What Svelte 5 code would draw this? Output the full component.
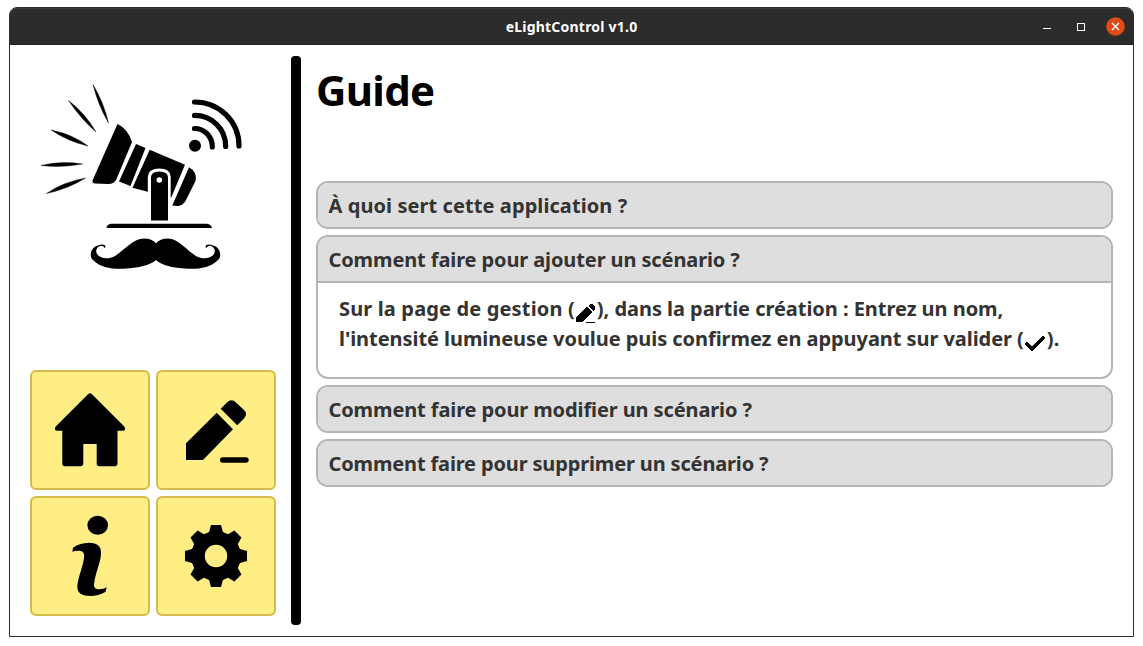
<script>
  const questions = [
    { title: 'À quoi sert cette application ?', open: false, spacing: 0.08 },
    { title: 'Comment faire pour ajouter un scénario ?', open: true, spacing: -0.11 },
    { title: 'Comment faire pour modifier un scénario ?', open: false, spacing: -0.11 },
    { title: 'Comment faire pour supprimer un scénario ?', open: false, spacing: -0.15 }
  ];

  const teeth = [0, 45, 90, 135, 180, 225, 270, 315];
</script>

<div class="window">
  <header class="titlebar">
    <span class="side"></span>
    <span class="title">eLightControl v1.0</span>
    <span class="side controls">
      <svg width="9" height="10" viewBox="0 0 9 10"><rect x="0" y="6" width="8" height="1" fill="#fff" /></svg>
      <svg width="8" height="8" viewBox="0 0 8 8"><rect x="0.5" y="0.5" width="7" height="7" fill="none" stroke="#fff" /></svg>
      <svg class="close" width="19" height="19" viewBox="0 0 19 19">
        <circle cx="9.5" cy="9.5" r="9.3" fill="#e24b17" />
        <path d="M6 6l7 7M13 6l-7 7" stroke="#fff" stroke-width="1.4" />
      </svg>
    </span>
  </header>

  <main class="content">
    <aside class="sidebar">
      <svg class="logo" viewBox="30 75 240 205">
        <path d="M93 84.5Q104 103 108.5 123Q98 105 93 84.5ZM68.5 100.5Q85 113 96 132Q81 119 68.5 100.5ZM51 130Q72 134 88 146Q68 141.500 51 130ZM41 165.500Q60 160.500 82.500 164Q62 168 41 165.500ZM46.500 193.500Q63 182 85.500 178Q68 189 46.500 193.500Z" stroke="#000" stroke-width="0.4" />
        <path d="M117.500 124Q128 129 132 142L116.500 179Q114.500 184 108 184L95 183.500Q92 183 92.500 180.500Z" />
        <path d="M136 144L145.500 148L130.500 186L119 181.500ZM149.700 149.800L185 164.800L171 198L132.500 187.800ZM189 167.300Q197.500 172 195.500 181L185.500 201Q182 207.500 172.300 205.500Z" />
        <path d="M147.800 222V177Q148 168.500 159.300 168.500Q170.700 168.500 170.700 177V222Z" fill="#fff" />
        <path d="M151 220.500V177.500Q151 171.500 159.300 171.500Q168 171.500 168 177.500V220.500Z" />
        <circle cx="159.300" cy="180" r="2.800" fill="#fff" />
        <path d="M106.500 228Q107 224 111 223.700H207Q211 224 212 228Z" />
        <path d="M156 243.300Q152 238.500 144 238.500C132 238.500 122 253 113 257C103 261 94.500 255 96.500 249.500C98 245.500 103 244.500 104.500 248L105.500 247C105.500 244 101 244 98 245.500C91 247 88.500 256 93 260C102 270 120 269.500 132 268C142 267 152 264 156 260C160 264 169 267 179 268C191 269.500 209 270 218 260C222.500 256 220 247 213 245.500C210 244 205.500 244 205.500 247L206.500 248C208 244.500 213 245.500 214.500 249.500C216.500 255 208 261 198 257C189 253 179 238.500 168 238.500Q160 238.500 156 243.300Z" />
        <circle cx="195" cy="145.700" r="6" />
        <path d="M194.500 128.500C204 128.500 212.300 136 212.300 147M194.500 115.400C212 115.400 225.700 129 225.700 146.500M194.500 102C219 102 239 121 239 146" fill="none" stroke="#000" stroke-width="5.200" stroke-linecap="round" />
      </svg>

      <nav class="menu">
        <button aria-label="Accueil">
          <svg viewBox="30 370 120 120">
            <path d="M88 394.300Q90 392.300 92 394.300L124.300 426.500Q126.500 430.700 122.500 430.700H117.500V463.500Q117.500 466.300 114.700 466.300H99.300Q96.700 466.300 96.700 463.500V444H83.300V463.500Q83.300 466.300 80.500 466.300H65Q62.300 466.300 62.300 463.500V430.700H57.500Q53.500 430.700 55.700 426.500Z" />
          </svg>
        </button>
        <button aria-label="Gestion">
          <svg viewBox="156 370 120 120">
            <path d="M186 443.300L216.700 412.700L233 429.300L203 460H186ZM220.700 408.700L227 402.400Q231.500 398 236 402.400L243.500 409.500Q248.500 414 243.800 418.700L237.200 425.300Z" />
            <rect x="220" y="457.300" width="28.700" height="5.400" rx="2.700" />
          </svg>
        </button>
        <button aria-label="Guide">
          <svg viewBox="30 496 120 120">
            <ellipse cx="97.700" cy="525.300" rx="10.300" ry="9.500" />
            <path d="M72.300 551.700L73 547.700Q80 543 89 542.800Q101.500 542.800 101 553.500C101 562 95 573 94 585C94 591.500 103 589.300 106.700 587.300L105.600 591.700Q98 596 90.500 596Q77.500 596 77.300 587C77.500 578 84 564 84.200 556C84.300 549.500 77 550.500 72.300 551.700Z" />
          </svg>
        </button>
        <button aria-label="Paramètres">
          <svg viewBox="-60 -60 120 120">
            <circle r="17" fill="none" stroke="#000" stroke-width="12" />
            {#each teeth as angle}
              <path d="M-5 -31H5L6.900 -24Q9.500 -22.500 12 -21.500L8 -10H-8L-12 -21.500Q-9.500 -22.500 -6.900 -24Z" transform="rotate({angle})" />
            {/each}
            <circle r="11.200" fill="#ffee83" />
          </svg>
        </button>
      </nav>
    </aside>

    <div class="divider"></div>

    <section class="guide">
      <h1>Guide</h1>
      <div class="accordion">
        {#each questions as question}
          <article class:open={question.open}>
            <h2 style="letter-spacing: {question.spacing}px">{question.title}</h2>
            {#if question.open}
              <p>
                <span class="lead">Sur la page de gestion (</span><svg class="inline" viewBox="0 0 20 20"><path d="M0 13L11 3L16 8L6 18H0ZM12 2L14 0H16L19 3V5L17 7Z" /><rect x="10" y="18" width="9" height="1" /></svg><span class="tail">), dans la partie création : Entrez un nom,</span><br />
                <span class="second">l'intensité lumineuse voulue puis confirmez en appuyant sur valider (</span><svg class="inline check" viewBox="0 0 20 20"><path d="M1 10L7 16L19 4" fill="none" stroke="#000" stroke-width="3.500" /></svg>).
              </p>
            {/if}
          </article>
        {/each}
      </div>
    </section>
  </main>
</div>

<style>
  :global(body) {
    background: #fff;
  }
  .window {
    box-sizing: border-box;
    width: 1125px;
    height: 630px;
    margin: 7px 0 0 9px;
    border: 1px solid #2c2c2c;
    border-radius: 8px 8px 0 0;
    overflow: hidden;
    font-family: "Noto Sans", sans-serif;
    font-weight: 700;
    display: flex;
    flex-direction: column;
  }
  .titlebar {
    height: 36px;
    box-sizing: border-box;
    border-top: 1px solid #3a3a3a;
    background: #2c2c2c;
    color: #fff;
    display: flex;
    align-items: center;
    flex: none;
    margin-bottom: 1px;
    box-shadow: 0 1px #222;
  }
  .side {
    flex: 1 1 0;
    box-sizing: border-box;
    padding-left: 8px;
  }
  .title {
    font-size: 14px;
    letter-spacing: 0.22px;
  }
  .controls {
    display: flex;
    justify-content: flex-end;
    align-items: center;
    padding: 0 8px 0 0;
  }
  .controls svg + svg {
    margin-left: 25px;
  }
  .controls svg.close {
    margin-left: 21px;
  }
  .content {
    flex: 1;
    display: flex;
    padding: 11px 20px;
  }
  .sidebar {
    width: 261px;
    padding-top: 19px;
  }
  svg {
    display: block;
  }
  .logo {
    width: 240px;
    height: 205px;
  }
  .menu {
    display: grid;
    grid-template-columns: 120px 120px;
    gap: 6px;
    margin-top: 90px;
  }
  button {
    box-sizing: border-box;
    width: 120px;
    height: 120px;
    padding: 0;
    border: 2px solid #d4bb4b;
    border-radius: 6px;
    background: #ffee83;
  }
  button svg {
    width: 120px;
    height: 120px;
    margin: -2px;
  }
  .divider {
    width: 10px;
    height: 569px;
    border-radius: 4px;
    background: #000;
  }
  .guide {
    flex: 1;
    padding-left: 15px;
  }
  h1 {
    margin: 0;
    height: 125px;
    line-height: 67px;
    font-size: 42px;
    letter-spacing: -0.7px;
    color: #000;
  }
  .accordion {
    display: flex;
    flex-direction: column;
    gap: 6px;
  }
  article {
    box-sizing: border-box;
    width: 797px;
    height: 48px;
    border: 2px solid #b5b5b5;
    border-radius: 12px;
    background: #dedede;
    color: #333;
    overflow: hidden;
    white-space: nowrap;
  }
  article.open {
    height: 144px;
    background: #fff;
  }
  h2 {
    margin: 0;
    height: 44px;
    line-height: 45px;
    padding-left: 10.5px;
    font-size: 20px;
    background: #dedede;
  }
  .open h2 {
    border-bottom: 2px solid #b5b5b5;
  }
  p {
    margin: 0;
    padding: 11px 0 0 21px;
    font-size: 20px;
    line-height: 30px;
  }
  .lead {
    letter-spacing: 0.15px;
  }
  .tail {
    letter-spacing: -0.04px;
  }
  .second {
    letter-spacing: -0.055px;
  }
  .inline {
    display: inline-block;
    width: 20px;
    height: 20px;
    margin: 0 1px;
    vertical-align: -8px;
    shape-rendering: crispEdges;
  }
  .check {
    margin-right: 2px;
    vertical-align: -7px;
  }
</style>
